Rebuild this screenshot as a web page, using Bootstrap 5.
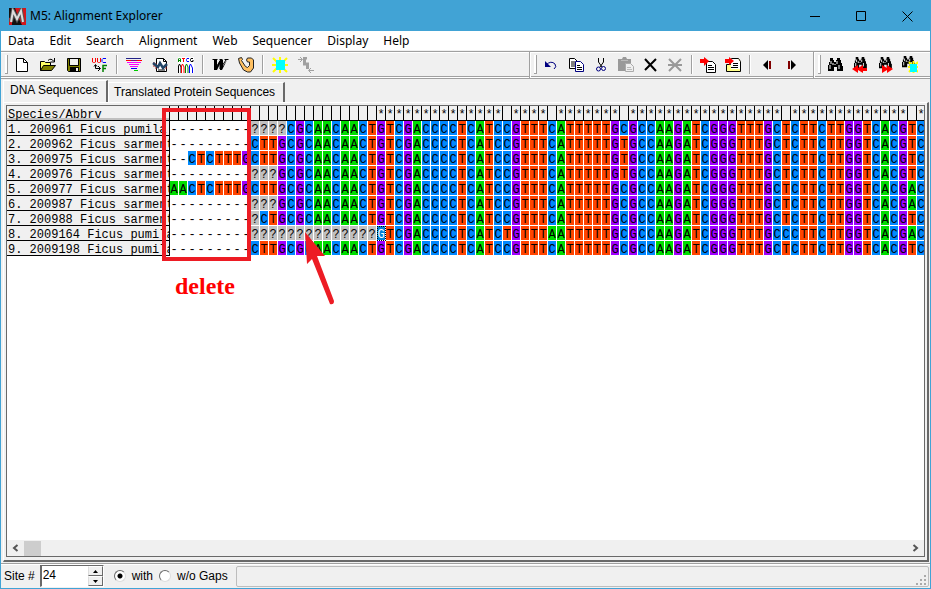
<!DOCTYPE html>
<html lang="en">
<head>
<meta charset="utf-8">
<meta name="viewport" content="width=device-width, initial-scale=1">
<title>M5: Alignment Explorer</title>
<link href="https://cdn.jsdelivr.net/npm/bootstrap@5.3.0/dist/css/bootstrap.min.css" rel="stylesheet">
<style>
:root{--face:#f0f0f0;--edge:#a0a0a0;--dark:#696969;--frame:#41a3d5;--anno:#ed1c24}
body{font:12px/15px "Liberation Sans",Arial,sans-serif;color:#000;background:var(--face)}
button,input{font:inherit;color:inherit}
svg{display:block;flex:none}
.app-window{border:1px solid var(--frame);background:var(--face)}
.title-bar{height:30px;background:var(--frame);font:12px/16px "Noto Sans","Open Sans",sans-serif}
.win-btn{width:46px;height:30px;padding:0;border:0;background:none;display:flex;align-items:center;justify-content:center}
.menu-bar{height:19px;background:#fff;font:12px/19px "Noto Sans","Open Sans",sans-serif}
.menu-bar button{padding:0 8px 0 7px;border:0;background:none;line-height:19px}
.tool-row{margin-top:1px;height:28px;border-top:1px solid var(--edge);border-bottom:1px solid var(--edge);box-shadow:inset 0 1px #fff,inset 0 -1px #fff,inset 0 -2px var(--edge)}
.band{height:26px;padding-bottom:1px}
.band + .band{border-left:1px solid var(--edge);box-shadow:inset 1px 0 #fff}
.grip{width:3px;height:19px;margin-right:1px;border:solid var(--edge);border-width:0 1px 1px 0;background:#fff;flex:none}
.tool{width:26px;height:24px;padding:0;border:0;background:none;display:flex;align-items:center;justify-content:center;flex:none}
.band-narrow .tool{width:25px}
.band-edit{padding-right:9px}
.divider{width:2px;height:19px;margin:0 3px;background:linear-gradient(90deg,var(--edge) 50%,#fff 50%);flex:none}
.tab-row{height:23px;padding-left:2px}
.seq-tab{border:0;border-top:1px solid #fff;border-left:1px solid #fff;border-right:2px solid var(--dark);background:var(--face);height:20px;padding:0 8px 0 5px;line-height:17px}
.seq-tab.current{height:22px;padding:0 8px 3px 6px;line-height:18px}
.page-area{border-top:1px solid #fff;border-left:1px solid #fff;border-right:2px solid var(--dark);border-bottom:2px solid var(--dark);margin:0 1px 0 2px;padding:2px 2px 3px;min-height:0}
.grid-box{border:1px solid var(--dark);background:#fff;min-height:0}
.grid-view{position:relative;overflow:hidden;min-height:0}
.seq-table{border-collapse:separate;border-spacing:0;table-layout:fixed;width:0;font-family:"Liberation Mono","Courier New",monospace;font-size:12px}
.seq-table th,.seq-table td{padding:4px 0 0;height:15px;overflow:hidden;white-space:nowrap;font-weight:400;line-height:10px;text-align:center}
.seq-table .name-col{width:163px}
.seq-table .site-col{width:9px}
.seq-table th{background:var(--face);border-right:1px solid #000;border-bottom:1px solid #000}
.seq-table th.species{padding-left:1px;text-align:left}
.seq-table thead th.species{box-shadow:inset 0 -2px #c0c0c0}
.seq-table td{border-right:1px solid #fff;border-bottom:1px solid #fff}
.nt-C{background:#0088ff}.nt-T{background:#ff4500}.nt-G{background:#a000ff}.nt-A{background:#00dd00}.nt-N{background:#c0c0c0}
.seq-table td.picked{background:#0080d7;color:#fff;outline:1px dotted #000;outline-offset:-1px}
.mark-box{position:absolute;left:155px;top:2px;width:89px;height:153px;border:4px solid var(--anno)}
.mark-text{position:absolute;left:168px;top:166px;font:bold 24px/28px "Liberation Serif","Times New Roman",serif;color:#f00}
.mark-arrow{position:absolute;left:293px;top:122px}
.h-scroll{height:16px;background:var(--face)}
.h-scroll button{width:17px;height:16px;padding:0;border:0;background:none;display:flex;align-items:center;justify-content:center}
.thumb{width:17px;height:15px;background:#cdcdcd}
.status-row{margin-top:1px;height:25px;border-top:1px solid var(--edge);box-shadow:inset 0 1px #fff;padding-left:3px}
.site-field{width:64px;height:22px;border:1px solid #fff;border-top-color:var(--dark);border-left:2px solid var(--dark);background:#fff;margin:0 4px 0 5px;flex:none}
.site-field input{width:46px;border:0;padding:0 0 2px 1px;outline:0;background:none}
.spin button{width:15px;height:10px;padding:0;border:1px solid var(--dark);border-top-color:#fff;border-left-color:#ddd;background:var(--face);display:flex;align-items:center;justify-content:center}
.gap-radio{appearance:none;width:12px;height:12px;border-radius:50%;border:1px solid;border-color:var(--dark) #ddd #ddd var(--dark);background:#fff;margin:0 6px;flex:none}
.gap-radio:checked{background:radial-gradient(circle,#000 2px,#fff 3px)}
.message-panel{height:21px;border:1px solid #bdbdbd;border-radius:2px;margin:1px 1px 0 8px}
</style>
<script src="https://cdn.jsdelivr.net/npm/bootstrap@5.3.0/dist/js/bootstrap.bundle.min.js"></script>
</head>
<body>
<svg width="0" height="0" class="position-absolute" aria-hidden="true">
  <symbol id="binoculars" viewBox="0 0 16 14"><path d="M3 0h3v2h1v2h2V2h1V0h3v2h1v3h1v3h1v5h-6V9H7v4H1V8h0V7h1V4h1z"/><path d="M4 3v3M3 7v4M6 5v2M10 3v3M12 7v4M8 6v1" stroke="#fff" fill="none"/></symbol>
</svg>
<div class="app-window vh-100 d-flex flex-column">
  <header class="title-bar d-flex align-items-center">
    <svg class="ms-2 me-1" width="17" height="17" viewBox="0 0 17 17"><path fill="#111" d="M0 0h17v17H0z"/><path fill="#d5151b" d="M6 0h11v17h-4L9 9zM0 10h3v7H0z"/><path d="M2 14 4 3l4 8 4-8 2 11" fill="none" stroke="#555" stroke-width="4"/><path d="M2 14 4 3l4 8 4-8 2 11" fill="none" stroke="#ddd" stroke-width="2"/></svg>
    <span class="me-auto">M5: Alignment Explorer</span>
    <button class="win-btn" aria-label="Minimize"><svg width="11" height="11"><path d="M0 5.5h10" stroke="#000"/></svg></button>
    <button class="win-btn" aria-label="Maximize"><svg width="11" height="11"><path d="M.5.5h9v9h-9z" fill="none" stroke="#000"/></svg></button>
    <button class="win-btn" aria-label="Close"><svg width="11" height="11"><path d="m.5.5 10 10m0-10-10 10" stroke="#000"/></svg></button>
  </header>
  <nav class="menu-bar d-flex" aria-label="Main menu">
    <button>Data</button><button>Edit</button><button>Search</button><button>Alignment</button><button>Web</button><button>Sequencer</button><button>Display</button><button>Help</button>
  </nav>
  <div class="tool-row d-flex px-1">
    <div class="band d-flex align-items-center flex-grow-1">
      <span class="grip"></span>
      <button class="tool" aria-label="New"><svg width="16" height="16"><path d="M2.500 1.500h7l4 4v9h-11z" fill="#fff" stroke="#000"/><path d="M9.500 1.500v4h4" fill="none" stroke="#000"/></svg></button>
      <button class="tool" aria-label="Open"><svg width="18" height="16"><path d="M1.500 13.500v-9h4l1 1h5v3" fill="#ff6" stroke="#000"/><path d="M1.500 13.500l3-5h12l-4 5z" fill="#808000" stroke="#000"/><path d="M9 3.500q3-3 6 1M15.500 1v4h-4" fill="none" stroke="#000"/></svg></button>
      <button class="tool" aria-label="Save"><svg width="16" height="16"><path d="M1.500 1.500h13v13h-12l-1-1z" fill="#808000" stroke="#000"/><path d="M4 2h8v6H4z" fill="#f0f0f0"/><path d="M3.500 2v6.500h9V2" fill="none" stroke="#000"/><path d="M4 10h9v5H4z"/><path d="M10 11h2v3h-2z" fill="#eee"/></svg></button>
      <button class="tool" aria-label="Translate"><svg width="16" height="16"><path d="M.5 1v4l1 .5h1l1-.5V1M5.500 1v4l1 .5h1l1-.5V1" fill="none" stroke="#f00"/><path d="M14 1.500h-3l-1 1v2l1 1h3" fill="none" stroke="#00f"/><path d="M3.500 8v3.500H8M6 9l2.500 2.500L6 14M2 9.500l1.500-2 1.500 2" fill="none" stroke="#000"/><path d="M15 8.500h-4V15M11 11.500h3" fill="none" stroke="#008000" stroke-width="1.500"/></svg></button>
      <span class="divider"></span>
      <button class="tool" aria-label="Align"><svg width="16" height="16" fill="none"><path d="M0 1.500h15" stroke="#228"/><path d="M0 3.500h5m6 0h5" stroke="#f00"/><path d="M5 3.500h6" stroke="#808"/><path d="M1 5.500h14M3 7.500h10M4 9.500h8" stroke="#f0f"/><path d="M5 11.500h6" stroke="#00f"/><path d="M8 13.500h4" stroke="#0c0"/></svg></button>
      <button class="tool" aria-label="Alignment file"><svg width="17" height="16"><path d="M4.500 1.500h7l3 3v10h-10z" fill="#fff" stroke="#000"/><path d="M11.500 1.500v3h3M6 13h7" fill="none" stroke="#000"/><path d="M2 5v5M4 6v6M14 7v5" stroke="#a22"/><path d="m1 6 5 4 2-4 3 5 4-4" fill="none" stroke="#246" stroke-width="2.500"/></svg></button>
      <button class="tool" aria-label="Trace file"><svg width="16" height="16" fill="none"><path d="M0 0h16v16H0z" fill="#fff"/><path d="M.5 5V2l1-1 1 1v3M.5 3.500h2" stroke="#080"/><path d="M4 1.500h3M5.500 1v4" stroke="#f00"/><path d="M11 1.500H9l-.5 1v1l.5 1h2" stroke="#00f"/><path d="M15 1.500h-2l-.5 1v1l.5 1h2V3" stroke="#000"/><path d="M.5 16V9l1-2 1.500 3v6" stroke="#000"/><path d="M3.500 16V9l1-2 1.500 3v6" stroke="#f00"/><path d="M7.500 16V9l1-2 1.500 3v6" stroke="#080"/><path d="M11.500 16V9l1-2 2 4v5" stroke="#00f"/></svg></button>
      <span class="divider"></span>
      <button class="tool" aria-label="ClustalW"><svg width="18" height="16"><path d="M1.500 2.500h5M8.500 2.500h3M13.500 2.500h4M4 3v9l5-8v8l6-9" fill="none" stroke="#000"/><path d="M3 3h3v6l3-6h3v6l4-6-5 10H9V7l-3 6H3z"/></svg></button>
      <button class="tool" aria-label="Muscle"><svg width="17" height="17" stroke-linejoin="round"><path d="M.5 2.500l3-1 1 2-1 1 4 6 2 1 2-2V6h-2l-1-2 1-2h4l2 2v8l-3 4h-3l-4-2-4-7z" fill="#ffc061" stroke="#222"/></svg></button>
      <span class="divider"></span>
      <button class="tool" aria-label="Highlight"><svg width="16" height="16"><path d="m1 1 14 14M15 1 1 15M8 0v16M0 8h16" stroke="#ff0" stroke-width="2"/><path d="M4 3h9v10H4z" fill="#0ff"/></svg></button>
      <button class="tool" aria-label="Step" disabled><svg width="16" height="16" fill="none" stroke="#a0a0a0"><path d="M0 2.500h4M2 0l2.500 2.500L2 5M11 13.500h5M13 11l-2.500 2.500L13 16"/><path d="M9 1H6.500v6h3v5" stroke-width="3"/></svg></button>
    </div>
    <div class="band band-narrow band-edit d-flex align-items-center ps-1">
      <span class="grip"></span>
      <button class="tool" aria-label="Undo"><svg width="16" height="16"><path d="M3 8q5-5 9-1 2 3-1 5" fill="none" stroke="#000080"/><path d="M2 4v6h6z" fill="#000080"/></svg></button>
      <button class="tool" aria-label="Copy"><svg width="16" height="16" fill="#fff"><path d="M1.500 1.500h5l3 3v7h-8z" stroke="#000"/><path d="M3 5h4M3 7h4M3 9h4" stroke="#000"/><path d="M7.500 4.500h5l3 3v7h-8z" stroke="#000080"/><path d="M9 8.500h3M9 10.500h5M9 12.500h5" stroke="#000"/></svg></button>
      <button class="tool" aria-label="Cut"><svg width="16" height="16" fill="none"><path d="M5.500 1v4L9 10M10.500 1v4L7 10" stroke="#000"/><circle cx="5.500" cy="12" r="2" stroke="#000080"/><circle cx="10.500" cy="11.500" r="2" stroke="#000080"/></svg></button>
      <button class="tool" aria-label="Paste" disabled><svg width="16" height="16"><path d="M0 2h4l1-2h3l1 2h4v12H0z" fill="#999"/><path d="M7.500 6.500h5l3 3v5h-8z" fill="#eee" stroke="#aaa"/><path d="M3 3.500h7M9 10.500h4M9 12.500h5" stroke="#bbb"/></svg></button>
      <button class="tool" aria-label="Delete"><svg width="14" height="14"><path d="m1 1 11 12M12 1 1 12" stroke="#000" stroke-width="2"/></svg></button>
      <button class="tool" aria-label="Delete gaps" disabled><svg width="15" height="14"><path d="m1 1 12 12M13 1 1 13M0 7h14" stroke="#999" stroke-width="2"/></svg></button>
      <span class="divider"></span>
      <button class="tool" aria-label="Insert from file"><svg width="17" height="16"><path d="M6.500 4.500h6l3 3v8h-9z" fill="#fff" stroke="#000"/><path d="M8 8.500h4M8 10.500h6M8 12.500h6" stroke="#000"/><path d="M0 2h4V0l5 4-5 5V6H0z" fill="#f00"/></svg></button>
      <button class="tool" aria-label="Insert folder"><svg width="17" height="16"><path d="M1.500 14.500v-7h4l1-6h7l2 3v10z" fill="#ff8" stroke="#000"/><path d="M6 2h7l2 3v7H6z" fill="#fff"/><path d="M8 6.500h5M8 8.500h5M6 10.500h7" stroke="#000"/><path d="M0 2h4V0l5 4-5 4V6H0z" fill="#f00"/></svg></button>
      <span class="divider"></span>
      <button class="tool" aria-label="Previous"><svg width="10" height="10"><path d="M6 0v10L1 5z"/><path d="M7 1h2v8H7z" fill="#800000"/></svg></button>
      <button class="tool" aria-label="Next"><svg width="10" height="10"><path d="M4 0v10l5-5z"/><path d="M1 1h2v8H1z" fill="#800000"/></svg></button>
    </div>
    <div class="band band-narrow d-flex align-items-center px-1">
      <span class="grip"></span>
      <button class="tool" aria-label="Find"><svg width="16" height="14"><use href="#binoculars"/></svg></button>
      <button class="tool" aria-label="Find previous"><svg width="16" height="16"><use href="#binoculars" width="16" height="12"/><path d="m0 12 6-4v3l5-3v3h4v3h-4v2l-5-3v3z" fill="#f00"/></svg></button>
      <button class="tool" aria-label="Find next"><svg width="16" height="16"><use href="#binoculars" width="16" height="12"/><path d="m16 12-6-4v3L5 8v8l5-3v3z" fill="#f00"/></svg></button>
      <button class="tool" aria-label="Find highlighted"><svg width="17" height="17"><use href="#binoculars" width="14" height="12"/><path d="m8 6 9 10M17 6 8 16M12.500 5v12M7 11h10" stroke="#ff0" stroke-width="2"/><path d="M9 8h7v8H9z" fill="#0ff"/></svg></button>
    </div>
  </div>
  <div class="tab-row d-flex align-items-end" role="tablist">
    <button class="seq-tab current" role="tab" aria-selected="true">DNA Sequences</button>
    <button class="seq-tab" role="tab" aria-selected="false">Translated Protein Sequences</button>
  </div>
  <main class="page-area d-flex flex-column flex-grow-1">
    <div class="grid-box d-flex flex-column flex-grow-1">
      <div class="grid-view flex-grow-1">
        <table class="seq-table">
          <thead><tr id="siteHead"><th class="species name-col" scope="col">Species/Abbrv</th></tr></thead>
          <tbody id="siteRows"></tbody>
        </table>
        <div class="mark-box"></div>
        <svg class="mark-arrow" width="40" height="80"><path d="M5 4 25 28l-8 0L34 73q0 4-4 3L12 31l-5 5z" fill="#ed1c24"/></svg>
        <div class="mark-text">delete</div>
      </div>
      <div class="h-scroll d-flex align-items-center">
        <button aria-label="Scroll left"><svg width="7" height="8"><path d="M5.500 1 2 4l3.500 3" fill="none" stroke="#555" stroke-width="2"/></svg></button>
        <div class="thumb me-auto"></div>
        <button aria-label="Scroll right"><svg width="7" height="8"><path d="M1.500 1 5 4 1.500 7" fill="none" stroke="#555" stroke-width="2"/></svg></button>
      </div>
    </div>
  </main>
  <footer class="status-row d-flex align-items-center">
    <label for="site">Site #</label>
    <div class="site-field d-flex">
      <input id="site" type="text" value="24">
      <div class="spin d-flex flex-column">
        <button aria-label="Increase"><svg width="5" height="3"><path d="M2.500 0 5 3H0z"/></svg></button>
        <button aria-label="Decrease"><svg width="5" height="3"><path d="M2.500 3 5 0H0z"/></svg></button>
      </div>
    </div>
    <input class="gap-radio" type="radio" name="gaps" id="withGaps" checked><label for="withGaps">with</label>
    <input class="gap-radio" type="radio" name="gaps" id="noGaps"><label for="noGaps">w/o Gaps</label>
    <div class="message-panel flex-grow-1 d-flex justify-content-end align-items-end">
      <svg width="12" height="12" fill="#aaa"><path d="M8 1h2v2H8zM4 5h2v2H4zM8 5h2v2H8zM0 9h2v2H0zM4 9h2v2H4zM8 9h2v2H8z"/></svg>
    </div>
  </footer>
</div>
<script>
const gaps = '---------';
const rows = [
  ['1. 200961 Ficus pumila',   gaps + '????CGCAACAACTGTCGACCCCTCATCCGTTTCATTTTTGCGCCAAGATCGGGTTTGCTCTTCTTGGTCACGTC'],
  ['2. 200962 Ficus sarment',  gaps + 'CTTGCGCAACAACTGTCGACCCCTCATCCGTTTCATTTTTGTGCCAAGATCGGGTTTGCTCTTCTTGGTCACGTC'],
  ['3. 200975 Ficus sarment',  '--CTCTTTG' + 'CTTGCGCAACAACTGTCGACCCCTCATCCGTTTCATTTTTGTGCCAAGATCGGGTTTGCTCTTCTTGGTCACGTC'],
  ['4. 200976 Ficus sarment',  gaps + '???GCGCAACAACTGTCGACCCCTCATCCGTTTCATTTTTGTGCCAAGATCGGGTTTGCTCTTCTTGGTCACGTC'],
  ['5. 200977 Ficus sarment',  'AACTCTTTG' + 'CTTGCGCAACAACTGTCGACCCCTCATCCGTTTCATTTTTGCGCCAAGATCGGGTTTGCTCTTCTTGGTCACGAC'],
  ['6. 200987 Ficus sarment',  gaps + '???GCGCAACAACTGTCGACCCCTCATCCGTTTCATTTTTGCGCCAAGATCGGGTTTGCTCTTCTTGGTCACGAC'],
  ['7. 200988 Ficus sarment',  gaps + '?CTGCGCAACAACTGTCGACCCCTCATCCGTTTCATTTTTGCGCCAAGATCGGGTTTGCTCTTCTTGGTCACGTC'],
  ['8. 2009164 Ficus pumila',  gaps + '??????????????GTCGACCCCTCATCTGTTTAATTTTTGCGCCAAGATCGGGTTTGCCCTTCTTGGTCACGAC'],
  ['9. 2009198 Ficus pumila',  gaps + 'CTTGCGCAACAACTGTCGACCCCTCATCCGTTTCATTTTTGCGCCAAGATCGGGTTTGCTCTTCTTGGTCACGTC']
];
const variable = [37, 42, 50, 68, 82];
const head = document.getElementById('siteHead');
for (let i = 0; i < 84; i++) {
  const th = document.createElement('th');
  th.className = 'site-col';
  th.textContent = i >= 23 && !variable.includes(i) ? '*' : '';
  head.append(th);
}
const body = document.getElementById('siteRows');
rows.forEach(([name, seq], r) => {
  const tr = body.insertRow();
  const th = document.createElement('th');
  th.className = 'species';
  th.scope = 'row';
  th.textContent = name;
  tr.append(th);
  [...seq].forEach((base, i) => {
    const td = tr.insertCell();
    td.textContent = base;
    if (base !== '-') td.className = 'nt-' + (base === '?' ? 'N' : base);
    if (r === 7 && i === 23) td.classList.add('picked');
  });
});
</script>
</body>
</html>
